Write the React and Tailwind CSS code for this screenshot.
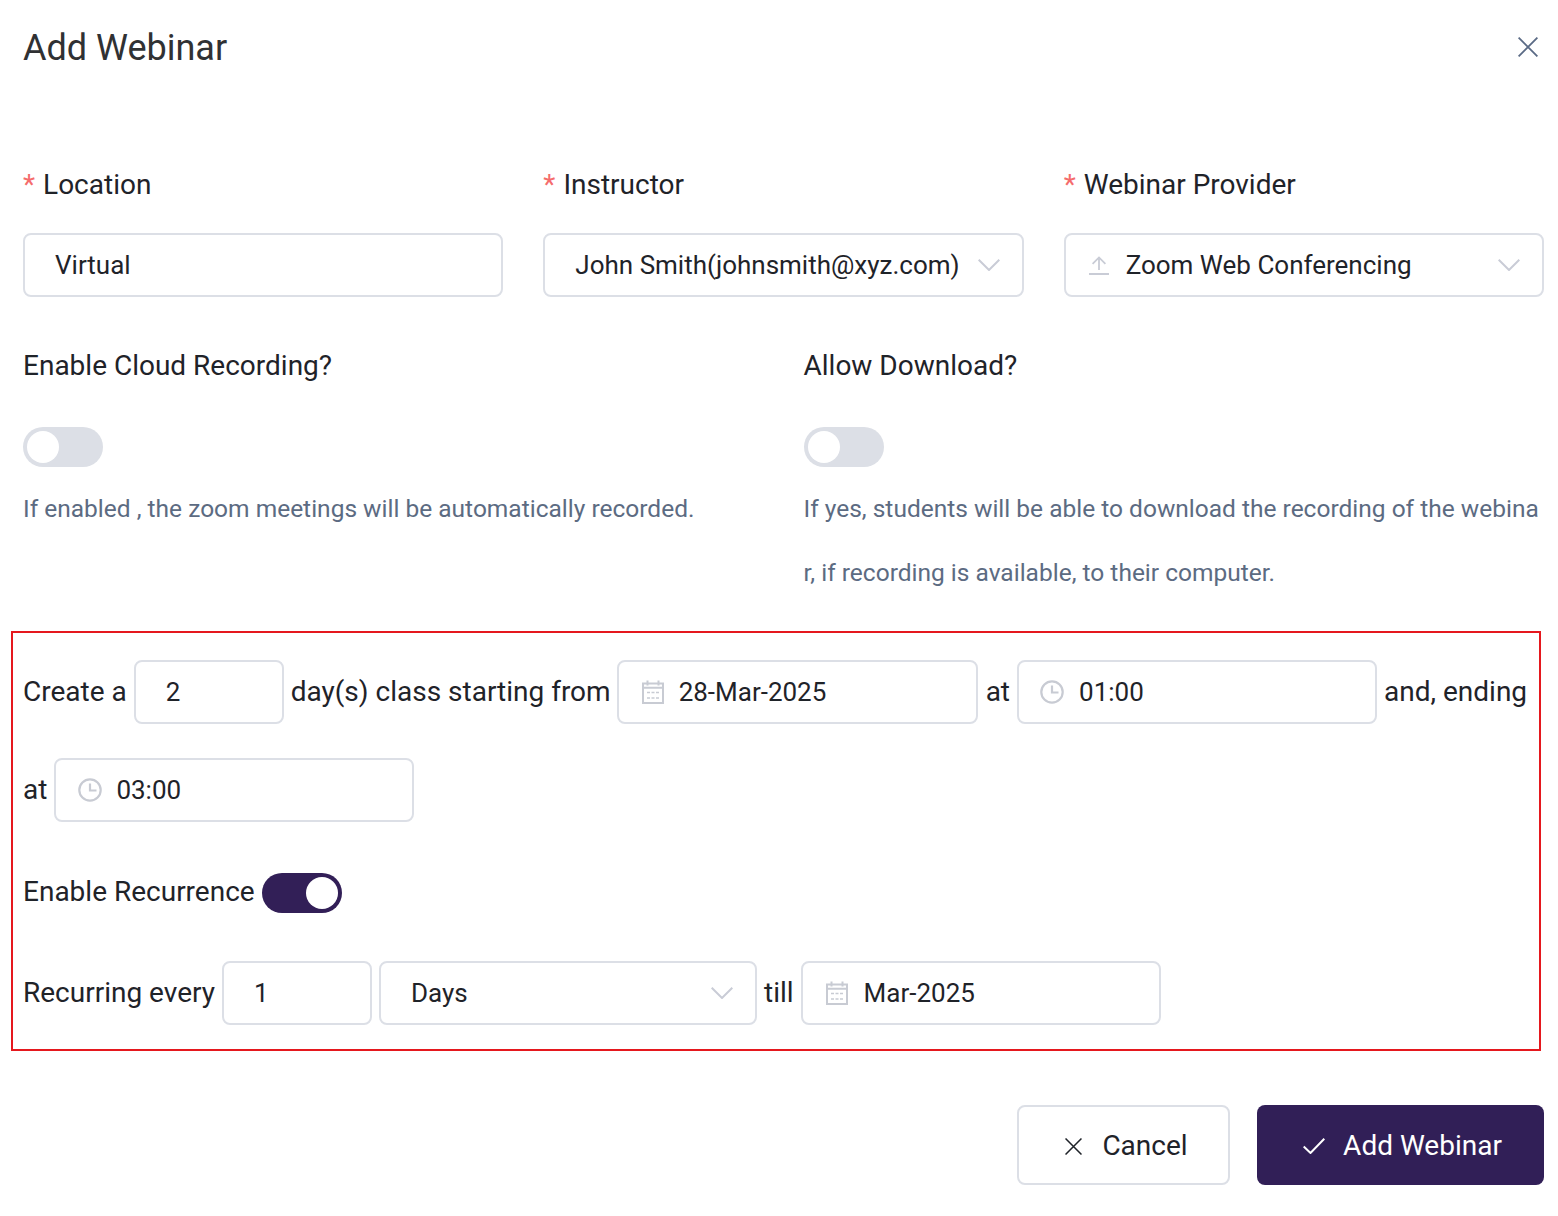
const CloseIcon = ({ className }) => (
  <svg viewBox="0 0 20 20" fill="none" stroke="currentColor" strokeWidth="1.8" className={className}>
    <path d="M0.6 0.6 19.4 19.4M19.4 0.6 0.6 19.4" />
  </svg>
);

const Chevron = () => (
  <svg viewBox="0 0 22 12" fill="none" stroke="#c9ccd6" strokeWidth="2" className="w-[22px] h-[12px] shrink-0">
    <path d="M0.7 0.7 11 11 21.3 0.7" />
  </svg>
);

const UploadIcon = () => (
  <svg viewBox="0 0 20 19" fill="none" stroke="#c9ccd6" strokeWidth="1.8" className="w-[20px] h-[19px] shrink-0">
    <path d="M0 18h20M10 14V1.5M3.6 7.8 10 1.4l6.4 6.4" />
  </svg>
);

const CalendarIcon = () => (
  <svg viewBox="0 0 24 24" fill="none" stroke="#c8cbd3" strokeWidth="2" className="w-[24px] h-[24px] shrink-0">
    <path d="M2 3.5h20V23H2zM2 7.8h20M6.5 0.5v5M17.5 0.5v5" />
    <path d="M6 12.5h3M10.5 12.5h3M15 12.5h3M6 18h3M10.5 18h3M15 18h3" strokeWidth="1.6" />
  </svg>
);

const ClockIcon = () => (
  <svg viewBox="0 0 24 24" fill="none" stroke="#c8cbd3" strokeWidth="2.2" className="w-[24px] h-[24px] shrink-0">
    <circle cx="12" cy="12" r="10.7" />
    <path d="M12 5.5V12.5H18.5" />
  </svg>
);

const Label = ({ children }) => (
  <div className="h-16 pt-[2px] flex items-center">
    <span className="text-[#f56c6c] mr-[8px]">*</span>
    {children}
  </div>
);

const Field = ({ className, icon, chevron, children }) => (
  <div className={`h-16 border-2 border-[#dcdfe6] rounded-lg bg-white flex items-center shrink-0 text-[26px] ${className}`}>
    {icon}
    <span className="flex-1 whitespace-nowrap pt-[1px]">{children}</span>
    {chevron && <Chevron />}
  </div>
);

const Toggle = ({ on }) => (
  <div className={`w-20 h-10 rounded-full p-1 flex ${on ? "bg-[#321f57] justify-end" : "bg-[#dcdfe6] justify-start"}`}>
    <div className="w-8 h-8 rounded-full bg-white" />
  </div>
);

export default function App() {
  return (
    <div className="w-[1558px] h-[1216px] bg-white pl-[23px] pr-[14px] text-[28px] text-[#1f2329] font-['Roboto',sans-serif]">
      <div className="h-[94px] flex items-center justify-between pr-[6px]">
        <h1 className="text-[36px] text-[#303133] pt-[2px]">Add Webinar</h1>
        <CloseIcon className="w-[20px] h-[20px] text-[#5a6a85]" />
      </div>

      <div className="mt-[58px] grid grid-cols-3 gap-x-10">
        <div>
          <Label>Location</Label>
          <Field className="mt-[17px] pl-[30px]">Virtual</Field>
        </div>
        <div>
          <Label>Instructor</Label>
          <Field className="mt-[17px] pl-[30px] pr-[22px]" chevron>John Smith(johnsmith@xyz.com)</Field>
        </div>
        <div>
          <Label>Webinar Provider</Label>
          <Field className="mt-[17px] pl-[23px] pr-[22px]" icon={<span className="mr-[17px] flex"><UploadIcon /></span>} chevron>
            Zoom Web Conferencing
          </Field>
        </div>
      </div>

      <div className="mt-9 grid grid-cols-2 gap-x-10">
        <div>
          <div className="h-16 pt-[2px] flex items-center">Enable Cloud Recording?</div>
          <div className="mt-[30px]"><Toggle /></div>
          <p className="mt-[9px] pt-[1px] text-[24.5px] leading-[64px] text-[#5c6b82] break-all">
            If enabled , the zoom meetings will be automatically recorded.
          </p>
        </div>
        <div>
          <div className="h-16 pt-[2px] flex items-center">Allow Download?</div>
          <div className="mt-[30px]"><Toggle /></div>
          <p className="mt-[9px] pt-[1px] text-[24.5px] leading-[64px] text-[#5c6b82] break-all">
            If yes, students will be able to download the recording of the webinar, if recording is available, to their computer.
          </p>
        </div>
      </div>

      <div className="mt-[26px] -ml-[12px] w-[1530px] border-2 border-[#e5181e] pl-[10px] pt-[27px] pb-[24px]">
        <div className="flex items-center gap-x-[7px]">
          <span>Create a</span>
          <Field className="w-[150px] pl-[30px]">2</Field>
          <span>day(s) class starting from</span>
          <Field className="w-[361px] pl-[22px] -ml-[1px]" icon={<span className="mr-[14px] flex"><CalendarIcon /></span>}>28-Mar-2025</Field>
          <span className="ml-[1px]">at</span>
          <Field className="w-[360px] pl-[21px]" icon={<span className="mr-[15px] flex"><ClockIcon /></span>}>01:00</Field>
          <span>and, ending</span>
        </div>
        <div className="mt-[34px] flex items-center gap-x-[7px]">
          <span>at</span>
          <Field className="w-[360px] pl-[22px]" icon={<span className="mr-[14px] flex"><ClockIcon /></span>}>03:00</Field>
        </div>
        <div className="mt-[51px] flex items-center gap-x-[7px]">
          <span className="leading-[38px] mb-[2px]">Enable Recurrence</span>
          <Toggle on />
        </div>
        <div className="mt-[48px] flex items-center gap-x-[7px]">
          <span>Recurring every</span>
          <Field className="w-[150px] pl-[30px]">1</Field>
          <Field className="w-[378px] pl-[30px] pr-[22px]" chevron>Days</Field>
          <span>till</span>
          <Field className="w-[360px] pl-[22px]" icon={<span className="mr-[15px] flex"><CalendarIcon /></span>}>Mar-2025</Field>
        </div>
      </div>

      <div className="mt-[54px] flex justify-end gap-x-[27px]">
        <button className="w-[213px] h-20 border-2 border-[#dcdfe6] rounded-lg flex items-center justify-center gap-x-[20px] pl-[6px] pt-[2px]">
          <CloseIcon className="w-[17px] h-[17px] text-[#1f2329]" />
          Cancel
        </button>
        <button className="w-[287px] h-20 bg-[#311f57] text-white rounded-lg flex items-center justify-center gap-x-[18px] pl-[4px] pt-[2px]">
          <svg viewBox="0 0 22 16" fill="none" stroke="currentColor" strokeWidth="2" className="w-[22px] h-[16px]">
            <path d="M0.7 8.5 7.5 15 21.3 0.7" />
          </svg>
          Add Webinar
        </button>
      </div>
    </div>
  );
}
